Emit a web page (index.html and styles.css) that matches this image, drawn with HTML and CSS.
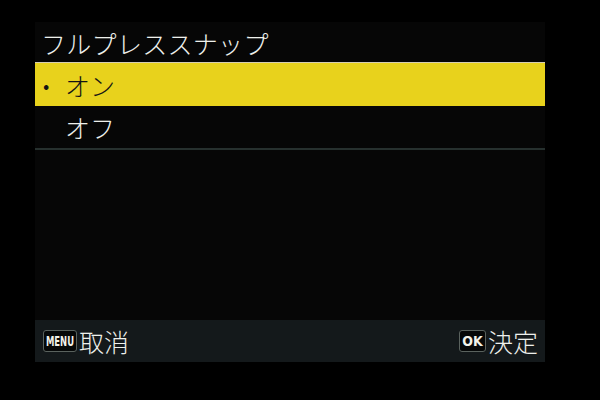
FILE: index.html
```html
<!DOCTYPE html>
<html lang="ja">
<head>
  <meta charset="UTF-8" />
  <meta name="viewport" content="width=device-width, initial-scale=1.0" />
  <title>フルプレススナップ</title>
  <link rel="stylesheet" href="styles.css">
</head>
<body>
  <div class="screen">
    <h2 class="title">フルプレススナップ</h2>

    <div class="menu">
      <div class="item selected"><span class="mark">•</span>オン</div>
      <div class="item"><span class="mark"></span>オフ</div>
    </div>

    <div class="footer">
      <div class="key"><span class="badge menu-key"><span>MENU</span></span>取消</div>
      <div class="key"><span class="badge ok-key"><span>OK</span></span>決定</div>
    </div>
  </div>
</body>
</html>
```

FILE: styles.css
```css
body {
  margin: 0;
  padding: 22px 55px 38px 35px;
  background-color: #000;
  font-family: "Noto Sans CJK JP", "Noto Sans", sans-serif;
  color: #eef0ec;
}
.screen {
  width: 510px;
  height: 340px;
  background: #060606;
  display: flex;
  flex-direction: column;
}
.title {
  margin: 0;
  height: 40px;
  padding-left: 6px;
  font-size: 25px;
  font-weight: 300;
  line-height: 42px;
  letter-spacing: 0.3px;
}
.menu {
  border-bottom: 2px solid #26302e;
}
.item {
  height: 42px;
  display: flex;
  align-items: center;
  padding-left: 8px;
  font-size: 25px;
  font-weight: 300;
}
.item.selected {
  height: 43px;
  background: #e8d21c;
  border-top: 1px solid #d8cfb0;
  color: #141414;
}
.mark {
  width: 22px;
  font-size: 20px;
}
.footer {
  margin-top: auto;
  height: 42px;
  background: #14191b;
  display: flex;
  justify-content: space-between;
  align-items: center;
  padding: 0 7px 0 8px;
}
.key {
  display: flex;
  align-items: center;
  font-size: 25px;
  font-weight: 300;
  line-height: 1;
}
.badge {
  display: flex;
  justify-content: center;
  align-items: center;
  height: 20px;
  margin-right: 2px;
  border: 1px solid #5a625e;
  border-radius: 3px;
  background: #060808;
  font-family: "DejaVu Sans Condensed", "DejaVu Sans", sans-serif;
  font-weight: bold;
  font-size: 14px;
  color: #f2f2ea;
}
.menu-key {
  width: 32px;
}
.menu-key span {
  display: inline-block;
  transform: scaleX(0.67);
}
.ok-key {
  width: 25px;
}
```
